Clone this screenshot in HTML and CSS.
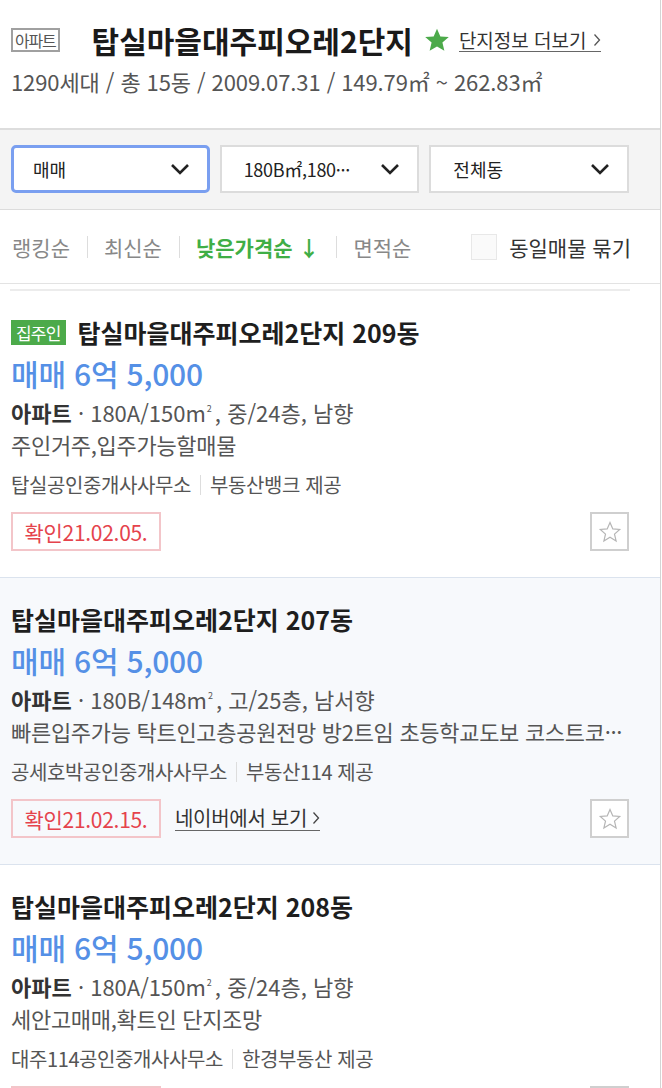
FILE: index.html
```html
<!DOCTYPE html>
<html lang="ko">
<head>
	<meta charset="UTF-8">
	<meta name="viewport" content="width=device-width, initial-scale=1.0">
	<title>탑실마을대주피오레2단지</title>
	<link rel="stylesheet" href="styles.css">
</head>
<body>
<div class="page">
	<header class="complex">
		<div class="complex-head">
			<span class="type-badge">아파트</span>
			<h1 class="complex-name">탑실마을대주피오레2단지</h1>
			<svg class="complex-star" viewBox="0 0 24 24" width="26" height="26"><path d="M12 1.5l3.1 7.2 7.8.6-5.9 5.1 1.8 7.6L12 17.9 5.2 22l1.8-7.6-5.9-5.1 7.8-.6z" fill="#4caa4a"/></svg>
			<a class="more-link" href="#">단지정보 더보기<svg viewBox="0 0 8 14" width="8" height="14"><path d="M1.5 1.5l5 5.5-5 5.5" fill="none" stroke="#555" stroke-width="1.3"/></svg></a>
		</div>
		<p class="complex-meta">1290세대 / 총 15동 / 2009.07.31 / 149.79㎡ ~ 262.83㎡</p>
	</header>

	<div class="filters">
		<div class="select is-focus"><span>매매</span><svg viewBox="0 0 20 12" width="20" height="12"><path d="M2 2l8 8 8-8" fill="none" stroke="#222" stroke-width="2.6"/></svg></div>
		<div class="select"><span class="select-num">180B㎡,180···</span><svg viewBox="0 0 20 12" width="20" height="12"><path d="M2 2l8 8 8-8" fill="none" stroke="#222" stroke-width="2.6"/></svg></div>
		<div class="select"><span>전체동</span><svg viewBox="0 0 20 12" width="20" height="12"><path d="M2 2l8 8 8-8" fill="none" stroke="#222" stroke-width="2.6"/></svg></div>
	</div>

	<div class="sorts">
		<ul class="sort-list">
			<li>랭킹순</li>
			<li>최신순</li>
			<li class="on">낮은가격순 ↓</li>
			<li>면적순</li>
		</ul>
		<label class="same-check"><span class="check-box"></span>동일매물 묶기</label>
	</div>

	<div class="list">
		<div class="list-top"></div>

		<article class="item">
			<div class="item-title"><span class="owner-badge">집주인</span>탑실마을대주피오레2단지 209동</div>
			<div class="item-price">매매 6억 5,000</div>
			<div class="item-info"><b>아파트</b> · 180A/150m<sup>2</sup>, 중/24층, 남향</div>
			<div class="item-desc">주인거주,입주가능할매물</div>
			<div class="item-agent">탑실공인중개사사무소<i class="bar"></i>부동산뱅크 제공</div>
			<div class="item-bottom">
				<span class="confirm">확인21.02.05.</span>
				<span class="fav-btn"><svg viewBox="0 0 24 24" width="24" height="24"><path d="M12 2.5l2.8 6.4 6.9.6-5.2 4.6 1.6 6.8L12 17.3l-6.1 3.6 1.6-6.8-5.2-4.6 6.9-.6z" fill="none" stroke="#b5b5b5" stroke-width="1.2"/></svg></span>
			</div>
		</article>

		<article class="item is-alt">
			<div class="item-title">탑실마을대주피오레2단지 207동</div>
			<div class="item-price">매매 6억 5,000</div>
			<div class="item-info"><b>아파트</b> · 180B/148m<sup>2</sup>, 고/25층, 남서향</div>
			<div class="item-desc">빠른입주가능 탁트인고층공원전망 방2트임 초등학교도보 코스트코···</div>
			<div class="item-agent">공세호박공인중개사사무소<i class="bar"></i>부동산114 제공</div>
			<div class="item-bottom">
				<span class="confirm">확인21.02.15.</span>
				<a class="naver-link" href="#">네이버에서 보기<svg viewBox="0 0 8 14" width="8" height="14"><path d="M1.5 1.5l5 5.5-5 5.5" fill="none" stroke="#444" stroke-width="1.3"/></svg></a>
				<span class="fav-btn"><svg viewBox="0 0 24 24" width="24" height="24"><path d="M12 2.5l2.8 6.4 6.9.6-5.2 4.6 1.6 6.8L12 17.3l-6.1 3.6 1.6-6.8-5.2-4.6 6.9-.6z" fill="none" stroke="#b5b5b5" stroke-width="1.2"/></svg></span>
			</div>
		</article>

		<article class="item">
			<div class="item-title">탑실마을대주피오레2단지 208동</div>
			<div class="item-price">매매 6억 5,000</div>
			<div class="item-info"><b>아파트</b> · 180A/150m<sup>2</sup>, 중/24층, 남향</div>
			<div class="item-desc">세안고매매,확트인 단지조망</div>
			<div class="item-agent">대주114공인중개사사무소<i class="bar"></i>한경부동산 제공</div>
			<div class="item-bottom">
				<span class="confirm">확인21.02.05.</span>
				<span class="fav-btn"><svg viewBox="0 0 24 24" width="24" height="24"><path d="M12 2.5l2.8 6.4 6.9.6-5.2 4.6 1.6 6.8L12 17.3l-6.1 3.6 1.6-6.8-5.2-4.6 6.9-.6z" fill="none" stroke="#b5b5b5" stroke-width="1.2"/></svg></span>
			</div>
		</article>
	</div>
</div>
</body>
</html>
```

FILE: styles.css
```css
/* 단지 매물 목록 */
*{box-sizing: border-box; margin: 0; padding: 0;}
body{
	background: #fff; color: #222;
	font-family: "Noto Sans CJK KR", "Noto Sans", sans-serif;
}
a{color: inherit; text-decoration: none;}
ul{list-style: none;}

.page{width: 661px; border-right: 1px solid #d4d4d4; overflow: hidden;}

/* 단지 헤더 */
.complex{padding: 21px 11px 33px; border-bottom: 2px solid #ddd;}
.complex-head{display: flex; align-items: center; height: 38px;}
.type-badge{
	border: 2px solid #a0a0a0; color: #555;
	font-size: 16px; line-height: 20px; padding: 0 2px;
	letter-spacing: -1.2px;
}
.complex-name{
	font-size: 30px; font-weight: 700; margin-left: 32px;
	letter-spacing: 0; color: #1a1a1a;
}
.complex-star{margin-left: 11px;}
.more-link{
	display: flex; align-items: center; gap: 6px;
	margin-left: 9px; font-size: 19px; color: #333;
	border-bottom: 1.5px solid #666; line-height: 23px;
}
.complex-meta{
	margin-top: 8px; font-size: 22px; line-height: 28px;
	color: #555; letter-spacing: -0.1px;
}

/* 필터 */
.filters{
	display: flex; gap: 10px;
	padding: 15px 31px 16px 11px;
	background: #f4f4f4; border-bottom: 1px solid #dcdcdc;
}
.select{
	flex: 1; height: 48px;
	display: flex; align-items: center; justify-content: space-between;
	padding: 0 17px 0 22px;
	background: #fff; border: 2px solid #dcdcdc;
	font-size: 18px; color: #222;
}
.select.is-focus{border: 3px solid #7a9ff0; border-radius: 5px; padding-left: 19px;}
.select-num{letter-spacing: -0.3px;}

/* 정렬 */
.sorts{
	height: 74px; display: flex; align-items: center;
	padding: 0 29px 0 12px; border-bottom: 1px solid #e3e3e3;
}
.sort-list{display: flex; align-items: center; flex: 1;}
.sort-list li{font-size: 21px; color: #888; line-height: 22px;}
.sort-list li + li{border-left: 1px solid #ddd; margin-left: 17px; padding-left: 16px;}
.sort-list li.on{color: #3fae46; font-weight: 700;}
.same-check{display: flex; align-items: center; gap: 12px; font-size: 21px; color: #333;}
.check-box{width: 26px; height: 26px; border: 1px solid #e8e8e8; background: #fafafa;}

/* 매물 목록 */
.list-top{height: 2px; margin: 5px 30px 0 10px; background: #ececec;}
.item{padding: 26px 31px 26px 11px; border-bottom: 1px solid #dbe3ee;}
.item.is-alt{background: #f7f9fc;}
.item-title{
	display: flex; align-items: center;
	font-size: 25px; font-weight: 700; line-height: 30px;
	color: #1e1e1e;
}
.owner-badge{
	background: #4caa4a; color: #fff;
	font-size: 17px; font-weight: 400; line-height: 25px;
	padding: 0 5px; margin-right: 12px; letter-spacing: -0.8px;
}
.item-price{
	margin-top: 6px; font-size: 30px; line-height: 40px;
	font-weight: 500; color: #5590e6; letter-spacing: -0.2px;
}
.item-info{font-size: 22px; line-height: 32px; color: #555;}
.item-info b{color: #333;}
.item-info sup{font-size: 9px; vertical-align: 10px; margin: 0 3px 0 1px;}
.item-desc{
	font-size: 22px; line-height: 32px; color: #555; letter-spacing: -0.3px;
	white-space: nowrap; overflow: hidden;
}
.item-agent{
	margin-top: 12px; display: flex; align-items: center;
	font-size: 20px; line-height: 26px; color: #555; letter-spacing: -0.4px;
}
.item-agent .bar{width: 1px; height: 20px; background: #ddd; margin: 0 9px;}
.item-bottom{margin-top: 14px; display: flex; align-items: center; height: 39px;}
.confirm{
	height: 39px; width: 150px; display: flex; align-items: center; justify-content: center;
	border: 2px solid #f3c5c9; color: #e5434c;
	font-size: 21px; letter-spacing: -0.3px;
}
.naver-link{
	display: flex; align-items: center; gap: 5px;
	margin-left: 14px; font-size: 20px; color: #333; letter-spacing: -0.3px;
	border-bottom: 1.5px solid #666; line-height: 24px;
}
.fav-btn{
	margin-left: auto; width: 39px; height: 39px;
	display: flex; align-items: center; justify-content: center;
	border: 2px solid #cfcfcf; background: #fff;
}
```
